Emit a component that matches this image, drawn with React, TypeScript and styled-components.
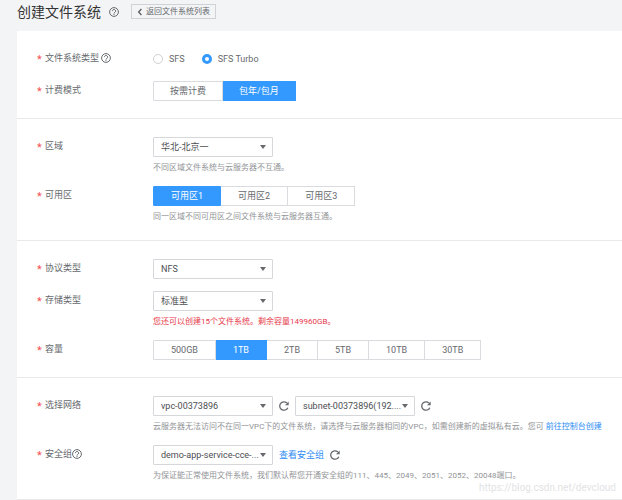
import React, { useId, useState } from "react";
import styled, { createGlobalStyle, css } from "styled-components";

const GlobalStyle = createGlobalStyle`
  *, *::before, *::after { box-sizing: border-box; }
  body {
    margin: 0;
    background: #f3f4f6;
    color: #66696d;
    font-family: Roboto, "Noto Sans CJK SC", sans-serif;
    font-size: 9px;
    line-height: 12px;
  }
  button, select, input { font: inherit; color: inherit; margin: 0; }
`;

const Page = styled.div`
  position: relative;
  padding-left: 17px;
`;

const Header = styled.header`
  display: flex;
  align-items: center;
  height: 31px;
  padding-bottom: 8px;
`;

const Title = styled.h1`
  margin: 0 8px 0 0;
  font-size: 14px;
  line-height: 20px;
  font-weight: 400;
  color: #333;
`;

const BackButton = styled.button`
  display: flex;
  align-items: center;
  gap: 3px;
  height: 15px;
  margin-left: 12px;
  padding: 0 5px;
  border: 1px solid #d0d2d5;
  background: transparent;
  font-size: 8px;
  line-height: 12px;
  white-space: nowrap;
`;

const Section = styled.section`
  display: flex;
  flex-direction: column;
  gap: 12px;
  padding: 18px 12px 17px 20px;
  border-bottom: 1px solid #e8e9eb;
  background: #fff;
`;

const Row = styled.div`
  display: grid;
  grid-template-columns: 116px minmax(0, 1fr);
`;

const LabelCell = styled.div<{ $gap: number }>`
  display: flex;
  align-items: center;
  gap: ${(p) => p.$gap}px;
  height: 18px;
`;

const LabelText = styled.span`
  display: flex;
  align-items: center;
  height: 12px;
  &::before {
    content: "*";
    width: 8px;
    padding-top: 4px;
    color: #f55050;
    font-size: 11px;
    line-height: 12px;
  }
`;

const Controls = styled.div`
  display: flex;
  align-items: center;
  height: 20px;
  gap: 6px;
`;

const Hint = styled.p<{ $alert?: boolean }>`
  margin: 5px 0 0;
  font-size: 8px;
  line-height: 12px;
  white-space: nowrap;
  color: ${(p) => (p.$alert ? "#e6394a" : "#929497")};
`;

const Link = styled.a`
  color: #2d8df5;
  text-decoration: none;
`;

const RadioGroup = styled.div`
  display: flex;
  gap: 17px;
`;

const RadioLabel = styled.label`
  display: flex;
  align-items: center;
  gap: 6px;
`;

const Radio = styled.input`
  appearance: none;
  width: 10px;
  height: 10px;
  border: 1px solid #cfd1d4;
  border-radius: 50%;
  background: #fff;
  &:checked { border: 3px solid #3399ff; }
`;

const Segments = styled.div`
  display: flex;
  height: 20px;
`;

const Segment = styled.button<{ $active: boolean; $pad: number }>`
  padding: 0 ${(p) => p.$pad}px;
  border: 1px solid #d9dbde;
  border-left-width: 0;
  background: #fff;
  white-space: nowrap;
  &:first-child { border-left-width: 1px; border-radius: 1px 0 0 1px; }
  &:last-child { border-radius: 0 1px 1px 0; }
  ${(p) =>
    p.$active &&
    css`
      border-color: #3399ff;
      background: #3399ff;
      color: #fff;
    `}
`;

const SelectBox = styled.div`
  position: relative;
  width: 120px;
  height: 20px;
`;

const Select = styled.select`
  appearance: none;
  width: 100%;
  height: 100%;
  padding: 0 13px 0 7px;
  border: 1px solid #d5d7da;
  border-radius: 1px;
  background: #fff;
  color: #4c4e52;
`;

const Caret = styled.svg`
  position: absolute;
  right: 7px;
  top: 8px;
  width: 6px;
  height: 4px;
  pointer-events: none;
`;

const IconButton = styled.button`
  display: flex;
  padding: 0;
  border: 0;
  background: none;
  color: #66696d;
`;

const Watermark = styled.div`
  position: absolute;
  right: 6px;
  bottom: 5px;
  font-size: 10px;
  line-height: 14px;
  color: #e2e3e5;
`;

function HelpIcon() {
  return (
    <IconButton type="button" aria-label="帮助">
      <svg width="10" height="10" viewBox="0 0 20 20" fill="none" stroke="currentColor" strokeWidth="2">
        <circle cx="10" cy="10" r="8.8" />
        <path d="M6.8 8.2a3.2 3.2 0 1 1 4.9 2.6c-1.2.7-1.7 1.1-1.7 2.2" />
        <path d="M10 14.2v2" />
      </svg>
    </IconButton>
  );
}

function RefreshButton() {
  return (
    <IconButton type="button" aria-label="刷新">
      <svg width="10" height="10" viewBox="0 0 20 20" fill="none">
        <path d="M17.6 13.4A8.4 8.4 0 1 1 15.8 4" stroke="currentColor" strokeWidth="2.6" />
        <path d="M19.4 1v7.4H12z" fill="currentColor" />
      </svg>
    </IconButton>
  );
}

function Dropdown({ id, label, value }: { id?: string; label?: string; value: string }) {
  return (
    <SelectBox>
      <Select id={id} aria-label={label} defaultValue={value}>
        <option>{value}</option>
      </Select>
      <Caret viewBox="0 0 6 4">
        <path d="M0 0h6L3 4z" fill="#66696d" />
      </Caret>
    </SelectBox>
  );
}

interface SegmentedProps {
  options: string[];
  initial: string;
  labelId: string;
  pad?: number;
}

function SegmentedControl({ options, initial, labelId, pad = 17 }: SegmentedProps) {
  const [value, setValue] = useState(initial);
  return (
    <Segments role="group" aria-labelledby={labelId}>
      {options.map((option) => (
        <Segment
          key={option}
          type="button"
          $pad={pad}
          $active={option === value}
          aria-pressed={option === value}
          onClick={() => setValue(option)}
        >
          {option}
        </Segment>
      ))}
    </Segments>
  );
}

interface FieldProps {
  label: string;
  help?: boolean;
  helpGap?: number;
  hint?: React.ReactNode;
  alert?: boolean;
  select?: boolean;
  children: (id: string) => React.ReactNode;
}

function Field({ label, help, helpGap = 0, hint, alert, select, children }: FieldProps) {
  const id = useId();
  return (
    <Row>
      <LabelCell $gap={helpGap}>
        {select ? (
          <LabelText as="label" htmlFor={id}>{label}</LabelText>
        ) : (
          <LabelText id={id}>{label}</LabelText>
        )}
        {help && <HelpIcon />}
      </LabelCell>
      <div>
        <Controls>{children(id)}</Controls>
        {hint && <Hint $alert={alert}>{hint}</Hint>}
      </div>
    </Row>
  );
}

export default function App() {
  return (
    <>
      <GlobalStyle />
      <Page>
        <Header>
          <Title>创建文件系统</Title>
          <HelpIcon />
          <BackButton type="button">
            <svg width="6" height="8" viewBox="0 0 6 8" fill="none" stroke="#555" strokeWidth="1.2">
              <path d="M4.4 1L1.6 4l2.8 3" />
            </svg>
            返回文件系统列表
          </BackButton>
        </Header>
        <main>
          <Section>
            <Field label="文件系统类型" help helpGap={2}>
              {(id) => (
                <RadioGroup role="radiogroup" aria-labelledby={id}>
                  <RadioLabel>
                    <Radio type="radio" name="fs-type" />
                    SFS
                  </RadioLabel>
                  <RadioLabel>
                    <Radio type="radio" name="fs-type" defaultChecked />
                    SFS Turbo
                  </RadioLabel>
                </RadioGroup>
              )}
            </Field>
            <Field label="计费模式">
              {(id) => (
                <SegmentedControl labelId={id} pad={16} options={["按需计费", "包年/包月"]} initial="包年/包月" />
              )}
            </Field>
          </Section>
          <Section>
            <Field label="区域" select hint="不同区域文件系统与云服务器不互通。">
              {(id) => <Dropdown id={id} value="华北-北京一" />}
            </Field>
            <Field label="可用区" hint="同一区域不同可用区之间文件系统与云服务器互通。">
              {(id) => (
                <SegmentedControl labelId={id} options={["可用区1", "可用区2", "可用区3"]} initial="可用区1" />
              )}
            </Field>
          </Section>
          <Section>
            <Field label="协议类型" select>
              {(id) => <Dropdown id={id} value="NFS" />}
            </Field>
            <Field label="存储类型" select alert hint="您还可以创建15个文件系统。剩余容量149960GB。">
              {(id) => <Dropdown id={id} value="标准型" />}
            </Field>
            <Field label="容量">
              {(id) => (
                <SegmentedControl
                  labelId={id}
                  options={["500GB", "1TB", "2TB", "5TB", "10TB", "30TB"]}
                  initial="1TB"
                />
              )}
            </Field>
          </Section>
          <Section>
            <Field
              label="选择网络"
              select
              hint={
                <>
                  云服务器无法访问不在同一VPC下的文件系统，请选择与云服务器相同的VPC，如需创建新的虚拟私有云。您可{" "}
                  <Link href="#console">前往控制台创建</Link>
                </>
              }
            >
              {(id) => (
                <>
                  <Dropdown id={id} value="vpc-00373896" />
                  <RefreshButton />
                  <Dropdown label="子网" value="subnet-00373896(192...." />
                  <RefreshButton />
                </>
              )}
            </Field>
            <Field
              label="安全组"
              help
              select
              hint="为保证能正常使用文件系统，我们默认帮您开通安全组的111、445、2049、2051、2052、20048端口。"
            >
              {(id) => (
                <>
                  <Dropdown id={id} value="demo-app-service-cce-..." />
                  <Link href="#security-groups">查看安全组</Link>
                  <RefreshButton />
                </>
              )}
            </Field>
          </Section>
        </main>
        <Watermark>https://blog.csdn.net/devcloud</Watermark>
      </Page>
    </>
  );
}
